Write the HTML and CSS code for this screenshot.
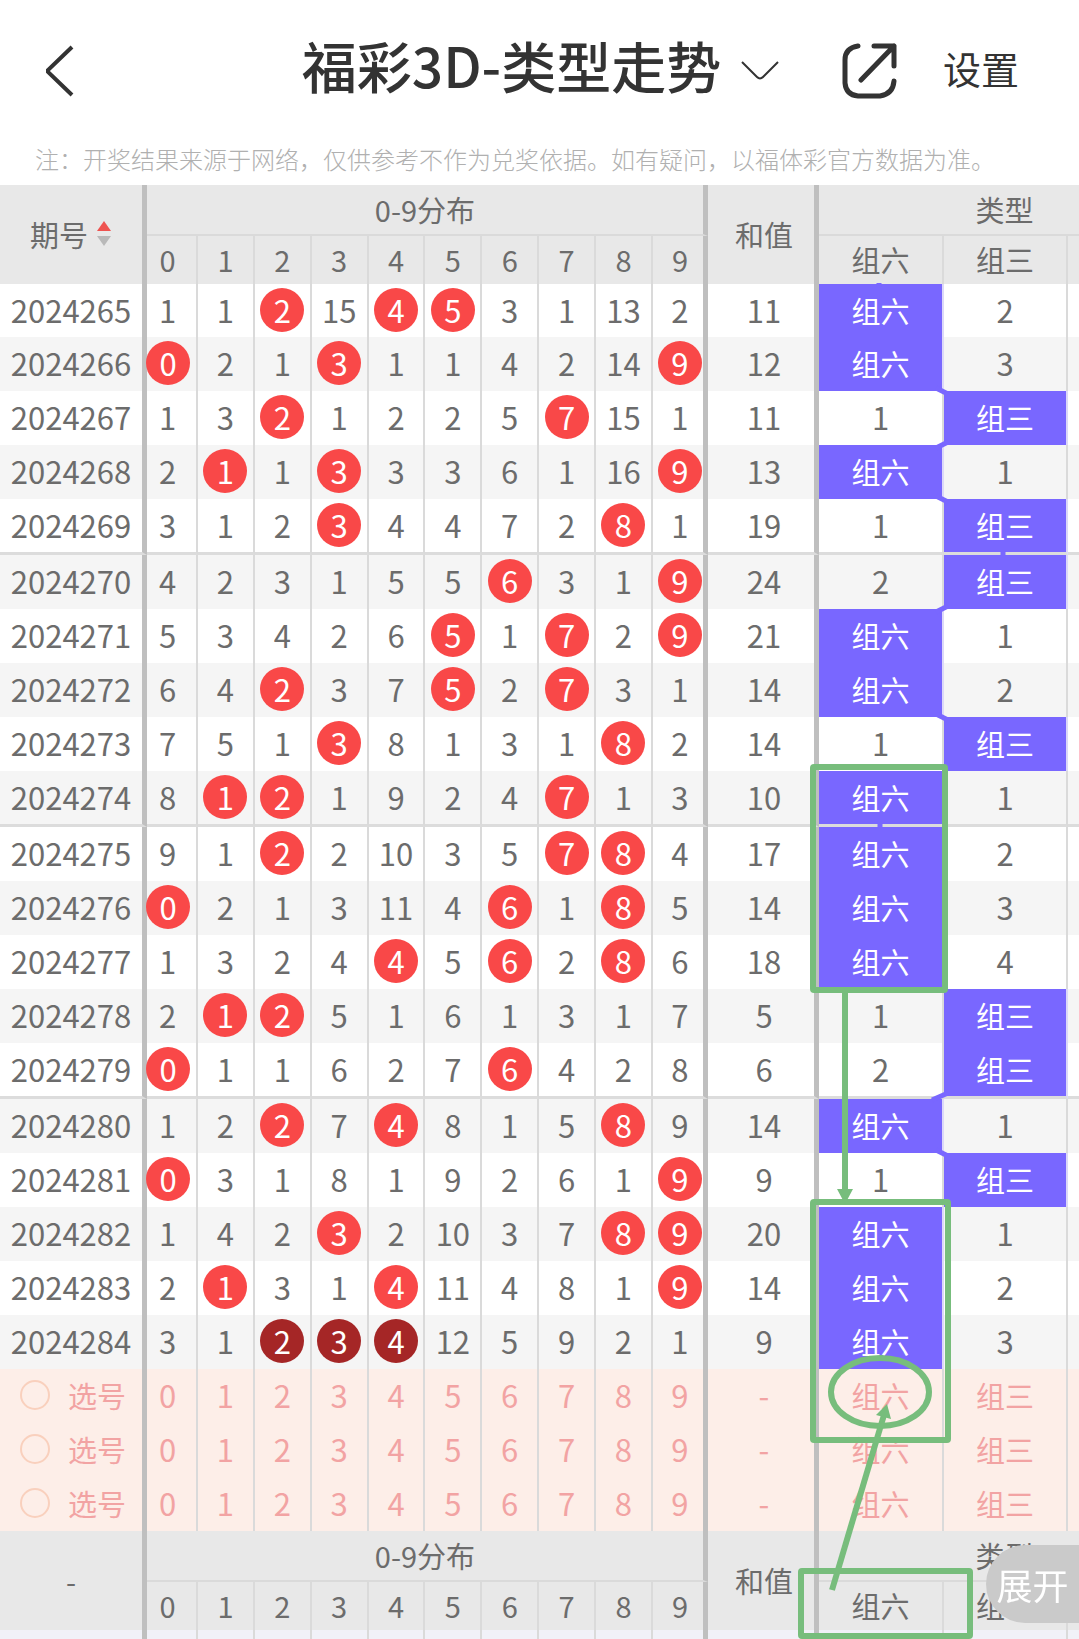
FILE: index.html
```html
<!DOCTYPE html>
<html lang="zh-CN">
<head>
  <meta charset="UTF-8" />
  <meta name="viewport" content="width=device-width, initial-scale=1.0" />
  <title>福彩3D-类型走势</title>
  <link rel="stylesheet" href="styles.css">
</head>
<body>
  <header class="topbar">
    <button class="icon-btn back" type="button" aria-label="返回">
      <svg width="32" height="52" viewBox="0 0 32 52"><path d="M28 2 L4 25 V27 L28 50" /></svg>
    </button>
    <button class="title-btn" type="button">
      <span class="title">福彩3D-类型走势</span>
      <svg width="38" height="22" viewBox="0 0 38 22"><path d="M1 2 L16 17 Q19 20 22 17 L37 2" /></svg>
    </button>
    <div class="actions">
      <button class="icon-btn share" type="button" aria-label="分享">
        <svg width="58" height="56" viewBox="0 0 58 56"><path d="M17 3 Q4 5 4 17 V40 Q5 52 17 53 H39 Q52 51 53 38 M33 3 H53 V23 M53 3 L20 37" /></svg>
      </button>
      <button class="settings" type="button">设置</button>
    </div>
  </header>
  <p class="note">注：开奖结果来源于网络，仅供参考不作为兑奖依据。如有疑问，以福体彩官方数据为准。</p>

  <main class="trend">
    <div class="trend-inner">
      <table>
        <colgroup>
          <col class="col-issue"><col class="col-first">
          <col><col><col><col><col><col><col><col>
          <col class="col-last"><col class="col-sum"><col class="col-six"><col class="col-three"><col class="col-three">
        </colgroup>
        <thead>
          <tr class="head-top">
            <th rowspan="2" class="thick">
              <button class="sort" type="button">期号
                <svg width="16" height="26" viewBox="0 0 16 26"><path class="up" d="M8 0 L15 10 H1 Z" /><path class="down" d="M1 15 H15 L8 25 Z" /></svg>
              </button>
            </th>
            <th colspan="10" class="thick group">0-9分布</th>
            <th rowspan="2" class="thick sum">和值</th>
            <th colspan="3" class="group">类型</th>
          </tr>
          <tr class="head-sub" id="headDigits"></tr>
        </thead>
        <tbody id="rows"></tbody>
        <tbody id="picks"></tbody>
        <tfoot>
          <tr class="head-top">
            <th rowspan="2" class="thick">-</th>
            <th colspan="10" class="thick group">0-9分布</th>
            <th rowspan="2" class="thick sum">和值</th>
            <th colspan="3" class="group">类型</th>
          </tr>
          <tr class="head-sub" id="footDigits"></tr>
          <tr class="tail" id="tail"></tr>
        </tfoot>
      </table>

      <svg class="marks" width="283" height="1454" viewBox="796 185 283 1454" aria-hidden="true">
        <g class="links">
          <path d="M879 283 V287" />
          <path d="M936 388 L948 394" />
          <path d="M936 448 L948 442" />
          <path d="M936 496 L948 502" />
          <path d="M1003 551 V556" />
          <path d="M936 612 L948 606" />
          <path d="M936 714 L948 720" />
          <path d="M880 823 V828" />
          <path d="M932 1100 L948 1093" />
          <path d="M936 1150 L948 1156" />
        </g>
        <g class="pen">
          <rect x="813" y="767" width="132" height="223" rx="1" />
          <path d="M845 993 V1192" />
          <rect x="813" y="1202" width="135" height="238" rx="1" />
          <ellipse cx="880" cy="1392" rx="49" ry="34" />
          <path d="M832 1590 L884 1415" />
          <rect x="801" y="1571" width="169" height="65" rx="1" />
        </g>
        <g class="pen-tip">
          <path d="M837 1189 H853 L845 1204 Z" />
          <path d="M887 1404 L876 1415 L891 1419 Z" />
        </g>
      </svg>
    </div>
  </main>

  <button class="expand" type="button">展开</button>

  <script>
    // 期号, 0-9 遗漏, 开奖号, 和值, 组六, 组三 (0 = 命中)
    const data = [
      ['2024265', '1 1 2 15 4 5 3 1 13 2', '245', 11, 0, 2],
      ['2024266', '0 2 1 3 1 1 4 2 14 9', '039', 12, 0, 3],
      ['2024267', '1 3 2 1 2 2 5 7 15 1', '27', 11, 1, 0],
      ['2024268', '2 1 1 3 3 3 6 1 16 9', '139', 13, 0, 1],
      ['2024269', '3 1 2 3 4 4 7 2 8 1', '38', 19, 1, 0],
      ['2024270', '4 2 3 1 5 5 6 3 1 9', '69', 24, 2, 0],
      ['2024271', '5 3 4 2 6 5 1 7 2 9', '579', 21, 0, 1],
      ['2024272', '6 4 2 3 7 5 2 7 3 1', '257', 14, 0, 2],
      ['2024273', '7 5 1 3 8 1 3 1 8 2', '38', 14, 1, 0],
      ['2024274', '8 1 2 1 9 2 4 7 1 3', '127', 10, 0, 1],
      ['2024275', '9 1 2 2 10 3 5 7 8 4', '278', 17, 0, 2],
      ['2024276', '0 2 1 3 11 4 6 1 8 5', '068', 14, 0, 3],
      ['2024277', '1 3 2 4 4 5 6 2 8 6', '468', 18, 0, 4],
      ['2024278', '2 1 2 5 1 6 1 3 1 7', '12', 5, 1, 0],
      ['2024279', '0 1 1 6 2 7 6 4 2 8', '06', 6, 2, 0],
      ['2024280', '1 2 2 7 4 8 1 5 8 9', '248', 14, 0, 1],
      ['2024281', '0 3 1 8 1 9 2 6 1 9', '09', 9, 1, 0],
      ['2024282', '1 4 2 3 2 10 3 7 8 9', '389', 20, 0, 1],
      ['2024283', '2 1 3 1 4 11 4 8 1 9', '149', 14, 0, 2],
      ['2024284', '3 1 2 3 4 12 5 9 2 1', '234', 9, 0, 3]
    ];
    const digits = [0, 1, 2, 3, 4, 5, 6, 7, 8, 9];

    function digitClass(i) {
      if (i === 0) return 'first';
      return i === 9 ? 'thick last' : '';
    }

    function typeCell(value, name) {
      return value === 0 ? `<td class="type">${name}</td>` : `<td>${value}</td>`;
    }

    const sub = digits.map(i => `<th class="${digitClass(i)}">${i}</th>`).join('') +
      '<th>组六</th><th>组三</th><th></th>';
    document.getElementById('headDigits').innerHTML = sub;
    document.getElementById('footDigits').innerHTML = sub;

    document.getElementById('rows').innerHTML = data.map(([issue, miss, draw, sum, six, three]) => {
      const cells = miss.split(' ').map((n, i) => {
        const text = draw.includes(i) ? `<span class="ball">${n}</span>` : n;
        return `<td class="${digitClass(i)}">${text}</td>`;
      }).join('');
      return `<tr><td class="thick">${issue}</td>${cells}<td class="thick sum">${sum}</td>` +
        typeCell(six, '组六') + typeCell(three, '组三') + '<td></td></tr>';
    }).join('');

    document.getElementById('picks').innerHTML = [1, 2, 3].map(n => {
      const cells = digits.map(i => `<td class="${digitClass(i)}"><button type="button">${i}</button></td>`).join('');
      return `<tr class="pick"><td class="thick"><label><input type="radio" name="pick" value="${n}">选号</label></td>` +
        cells + '<td class="thick sum">-</td><td><button type="button">组六</button></td>' +
        '<td><button type="button">组三</button></td><td></td></tr>';
    }).join('');

    document.getElementById('tail').innerHTML = '<td class="thick"></td>' +
      digits.map(i => `<td class="${digitClass(i)}"></td>`).join('') +
      '<td class="thick"></td><td></td><td></td><td></td>';
  </script>
</body>
</html>
```

FILE: styles.css
```css
* {
  box-sizing: border-box;
}

body {
  margin: 0;
  font-family: "Noto Sans CJK SC", "Noto Sans", sans-serif;
  background-color: #fff;
  color: #6c6c6c;
}

button {
  padding: 0;
  border: 0;
  background: none;
  font: inherit;
  color: inherit;
  cursor: pointer;
}

svg {
  display: block;
  fill: none;
}

/* title bar */
.topbar {
  display: grid;
  grid-template-columns: 1fr auto 1fr;
  align-items: center;
  height: 135px;
  padding: 6px 60px 0 44px;
  color: #333;
}

.topbar svg {
  stroke: #333;
}

.back {
  justify-self: start;
}

.back svg {
  stroke-width: 4;
}

.title-btn {
  display: flex;
  align-items: center;
  gap: 20px;
  margin-left: 18px;
}

.title {
  padding-bottom: 14px;
  font-size: 55px;
  font-weight: 500;
  line-height: 64px;
  white-space: nowrap;
}

.title-btn svg {
  stroke-width: 2;
}

.actions {
  display: flex;
  align-items: center;
  justify-content: flex-end;
  gap: 44px;
}

.share svg {
  stroke-width: 5;
  stroke-linecap: round;
  stroke-linejoin: round;
}

.settings {
  padding-bottom: 6px;
  font-size: 38px;
  line-height: 48px;
  white-space: nowrap;
}

.note {
  margin: 0;
  padding: 0 35px;
  height: 50px;
  font-size: 24px;
  font-weight: 300;
  line-height: 48px;
  color: #b0b0b0;
  white-space: nowrap;
}

/* trend table, third type column scrolls in from the right */
.trend {
  overflow-x: auto;
  overflow-y: hidden;
  scrollbar-width: none;
}

.trend-inner {
  position: relative;
  width: calc(100% + 113px);
}

table {
  width: 100%;
  table-layout: fixed;
  border-collapse: separate;
  border-spacing: 0;
}

.col-issue {
  width: 147px;
}

.col-first {
  width: 51px;
}

.col-last {
  width: 55px;
}

.col-sum {
  width: 111px;
}

.col-six {
  width: 125px;
}

.col-three {
  width: 124px;
}

th,
td {
  padding: 0 0 2px;
  border-right: 2px solid #dadada;
  font-size: 31px;
  font-weight: 400;
  line-height: 44px;
  text-align: center;
  vertical-align: middle;
  white-space: nowrap;
}

th {
  background-color: #e8e8e8;
  font-size: 29px;
}

.head-sub th {
  font-size: 29px;
}

.thick {
  border-right: 5px solid #bfbfbf;
}

.first {
  padding-right: 8px;
}

.last {
  padding-left: 4px;
}

.sum {
  padding-left: 6px;
}

.group {
  border-bottom: 2px solid #dadada;
}

.head-top {
  height: 51px;
}

.head-sub {
  height: 48px;
}

#rows tr,
#picks tr {
  height: 54px;
}

#rows tr:first-child {
  height: 53px;
}

#rows tr:nth-child(even) {
  background-color: #f5f5f5;
}

#rows tr:nth-child(5n):not(:last-child) {
  height: 56px;
}

#rows tr:nth-child(5n):not(:last-child) td {
  border-bottom: 3px solid #dcdcdc;
}

.ball {
  display: block;
  width: 44px;
  height: 44px;
  margin: 0 auto;
  border-radius: 50%;
  background-color: #f94848;
  color: #fff;
}

.first .ball {
  margin: 0 -1px;
}

#rows tr:last-child .ball {
  background-color: #a52626;
}

#rows .type {
  background-color: #7967ff;
  background-clip: padding-box;
  border-right-color: #dcd8f8;
  color: #fff;
  font-size: 29px;
}

.sort {
  display: inline-flex;
  align-items: center;
  gap: 8px;
}

.up {
  fill: #ee5350;
}

.down {
  fill: #b9b9b9;
}

.pick {
  background-color: #fdeee8;
  color: #f2a3a3;
}

.pick label {
  display: flex;
  align-items: center;
  justify-content: center;
  gap: 18px;
  padding-left: 4px;
  font-size: 29px;
}

.pick td:nth-last-child(-n+3) {
  font-size: 29px;
}

.pick input {
  appearance: none;
  width: 30px;
  height: 30px;
  margin: 0;
  border: 2px solid #f9d0bd;
  border-radius: 50%;
}

.pick input:checked {
  background-color: #f94848;
}

.tail {
  height: 10px;
  background-color: #f1f1f8;
}

.tail td {
  line-height: 0;
}

/* hand-drawn marks over the type columns */
.marks {
  position: absolute;
  top: 0;
  right: 113px;
  pointer-events: none;
}

.links {
  stroke: #7967ff;
  stroke-width: 5;
}

.pen {
  stroke: #77bd7c;
  stroke-width: 6;
}

.pen-tip {
  fill: #77bd7c;
}

.expand {
  position: fixed;
  right: 0;
  bottom: 16px;
  width: 93px;
  height: 78px;
  border-radius: 39px 0 0 39px;
  background-color: #cacaca;
  color: #fff;
  font-size: 36px;
  line-height: 78px;
}
```
